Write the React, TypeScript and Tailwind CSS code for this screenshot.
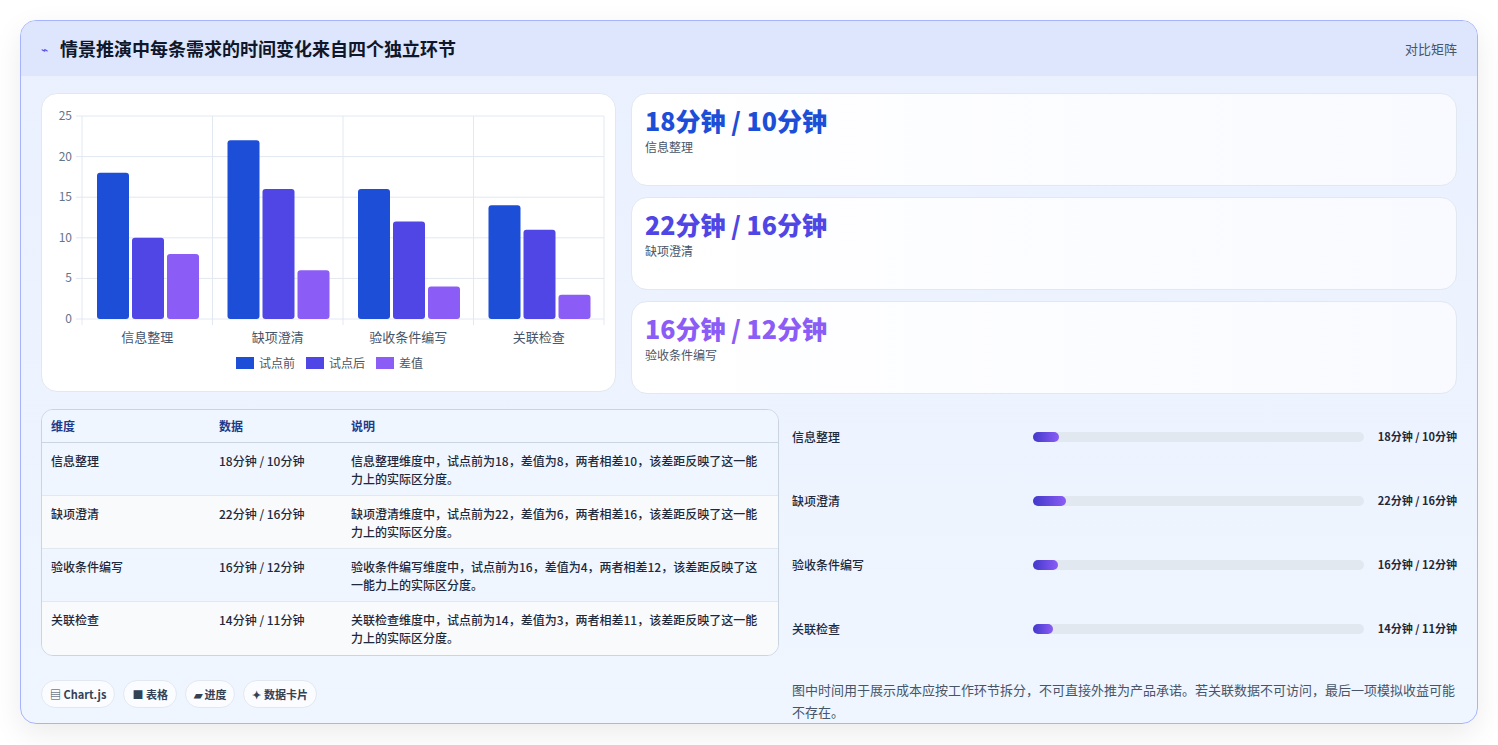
const font = { fontFamily: '"Noto Sans CJK SC", "Noto Sans", sans-serif' };

const rows = [
  { name: "信息整理", data: "18分钟 / 10分钟", desc: "信息整理维度中，试点前为18，差值为8，两者相差10，该差距反映了这一能力上的实际区分度。", v: [18, 10, 8], w: 8 },
  { name: "缺项澄清", data: "22分钟 / 16分钟", desc: "缺项澄清维度中，试点前为22，差值为6，两者相差16，该差距反映了这一能力上的实际区分度。", v: [22, 16, 6], w: 10 },
  { name: "验收条件编写", data: "16分钟 / 12分钟", desc: "验收条件编写维度中，试点前为16，差值为4，两者相差12，该差距反映了这一能力上的实际区分度。", v: [16, 12, 4], w: 7.5 },
  { name: "关联检查", data: "14分钟 / 11分钟", desc: "关联检查维度中，试点前为14，差值为3，两者相差11，该差距反映了这一能力上的实际区分度。", v: [14, 11, 3], w: 6 },
];
const colors = ["#1d4ed8", "#4f46e5", "#8b5cf6"];

function Chart() {
  const x0 = 40, y0 = 22, W = 522, H = 203, gw = W / 4;
  return (
    <svg width="574" height="298" className="block">
      {[0, 5, 10, 15, 20, 25].map((t) => {
        const y = y0 + H - (t / 25) * H;
        return (
          <g key={t}>
            <line x1={x0 - 6} x2={x0 + W} y1={y} y2={y} stroke="#e2e8f0" />
            <text x={x0 - 10} y={y + 4} textAnchor="end" fontSize="12" fill="#64748b">{t}</text>
          </g>
        );
      })}
      {[0, 1, 2, 3, 4].map((i) => (
        <line key={i} x1={x0 + i * gw} x2={x0 + i * gw} y1={y0} y2={y0 + H + 6} stroke="#e2e8f0" />
      ))}
      {rows.map((r, i) => (
        <g key={r.name}>
          {r.v.map((v, j) => {
            const h = (v / 25) * H;
            return <rect key={j} x={x0 + i * gw + 15 + j * 35} y={y0 + H - h} width="32" height={h} rx="3" fill={colors[j]} />;
          })}
          <text x={x0 + i * gw + gw / 2} y={y0 + H + 23} textAnchor="middle" fontSize="13" fill="#475569">{r.name}</text>
        </g>
      ))}
      {["试点前", "试点后", "差值"].map((l, j) => {
        const x = [194, 264, 334][j];
        return (
          <g key={l}>
            <rect x={x} y={263} width="18" height="12" fill={colors[j]} />
            <text x={x + 23} y={274} fontSize="12" fill="#475569">{l}</text>
          </g>
        );
      })}
    </svg>
  );
}

export default function App() {
  const cards = [
    { t: "18分钟 / 10分钟", s: "信息整理", c: "text-[#1d4ed8]" },
    { t: "22分钟 / 16分钟", s: "缺项澄清", c: "text-[#4f46e5]" },
    { t: "16分钟 / 12分钟", s: "验收条件编写", c: "text-[#8b5cf6]" },
  ];
  return (
    <div className="w-[1498px] h-[745px] bg-white pt-5 px-5" style={font}>
      <div className="rounded-2xl border border-[#a5b4fc] overflow-hidden bg-gradient-to-b from-[#eaf0fe] to-[#eff6ff] shadow-[0_10px_30px_rgba(0,0,0,0.08)] h-[704px]">
        <div className="h-[55px] bg-[#dde6fd] flex items-center justify-between px-5">
          <div className="flex items-center gap-3">
            <span className="text-[#4f46e5] text-xs">⌁</span>
            <span className="text-[18px] font-bold text-[#0f172a]">情景推演中每条需求的时间变化来自四个独立环节</span>
          </div>
          <span className="text-[13px] text-[#475569]">对比矩阵</span>
        </div>
        <div className="px-5 pt-[17px]">
          <div className="flex gap-[15px]">
            <div className="w-[575px] h-[299px] bg-white rounded-2xl border border-[#e2e8f0]">
              <Chart />
            </div>
            <div className="flex-1 flex flex-col gap-[11px]">
              {cards.map((c) => (
                <div key={c.s} className="h-[93px] rounded-2xl border border-[#e2e8f0] bg-gradient-to-r from-white to-[#f8faff] px-[13px] pt-[8px]">
                  <div className={`text-[25px] font-extrabold leading-[36px] ${c.c}`}>{c.t}</div>
                  <div className="text-[12px] text-[#475569]">{c.s}</div>
                </div>
              ))}
            </div>
          </div>
          <div className="flex gap-[13px] mt-[15px]">
            <div className="w-[738px] shrink-0">
              <div className="rounded-xl border border-[#cbd5e1] overflow-hidden text-[12px] text-[#1e293b]">
                <div className="flex h-[33px] items-center bg-[#eff6ff] border-b border-[#cbd5e1] font-bold text-[#1e3a8a]">
                  <div className="w-[177px] pl-[9px]">维度</div>
                  <div className="w-[132px]">数据</div>
                  <div className="flex-1">说明</div>
                </div>
                {rows.map((r, i) => (
                  <div key={r.name} className={`flex h-[53px] pt-[9px] font-medium ${i % 2 ? "bg-[#f8fafc]" : "bg-[#eff6ff]"} ${i < 3 ? "border-b border-[#e2e8f0]" : ""}`}>
                    <div className="w-[177px] pl-[9px]">{r.name}</div>
                    <div className="w-[132px]">{r.data}</div>
                    <div className="flex-1 pr-3 leading-[18px]">{r.desc}</div>
                  </div>
                ))}
              </div>
              <div className="flex gap-2 mt-6 text-[11px] font-bold text-[#334155]">
                {["▤ Chart.js", "■ 表格", "▰ 进度", "✦ 数据卡片"].map((c) => (
                  <span key={c} className="h-7 px-2 flex items-center rounded-full bg-white/70 border border-[#e2e8f0]">{c}</span>
                ))}
              </div>
            </div>
            <div className="flex-1 flex flex-col">
              <div className="flex flex-col pt-[19px]">
                {rows.map((r) => (
                  <div key={r.name} className="h-[64px] flex items-start text-[12px] font-medium text-[#1e293b]">
                    <div className="w-[241px]">{r.name}</div>
                    <div className="flex-1 h-[10px] mt-[4px] rounded-full bg-[#e2e8f0]">
                      <div className="h-full rounded-full bg-gradient-to-r from-[#4338ca] to-[#8b5cf6]" style={{ width: `${r.w}%` }} />
                    </div>
                    <div className="w-[93px] text-right font-bold text-[11px]">{r.data}</div>
                  </div>
                ))}
              </div>
              <p className="text-[13px] text-[#475569] leading-[22px] mt-[-5px]">图中时间用于展示成本应按工作环节拆分，不可直接外推为产品承诺。若关联数据不可访问，最后一项模拟收益可能不存在。</p>
            </div>
          </div>
        </div>
      </div>
    </div>
  );
}
